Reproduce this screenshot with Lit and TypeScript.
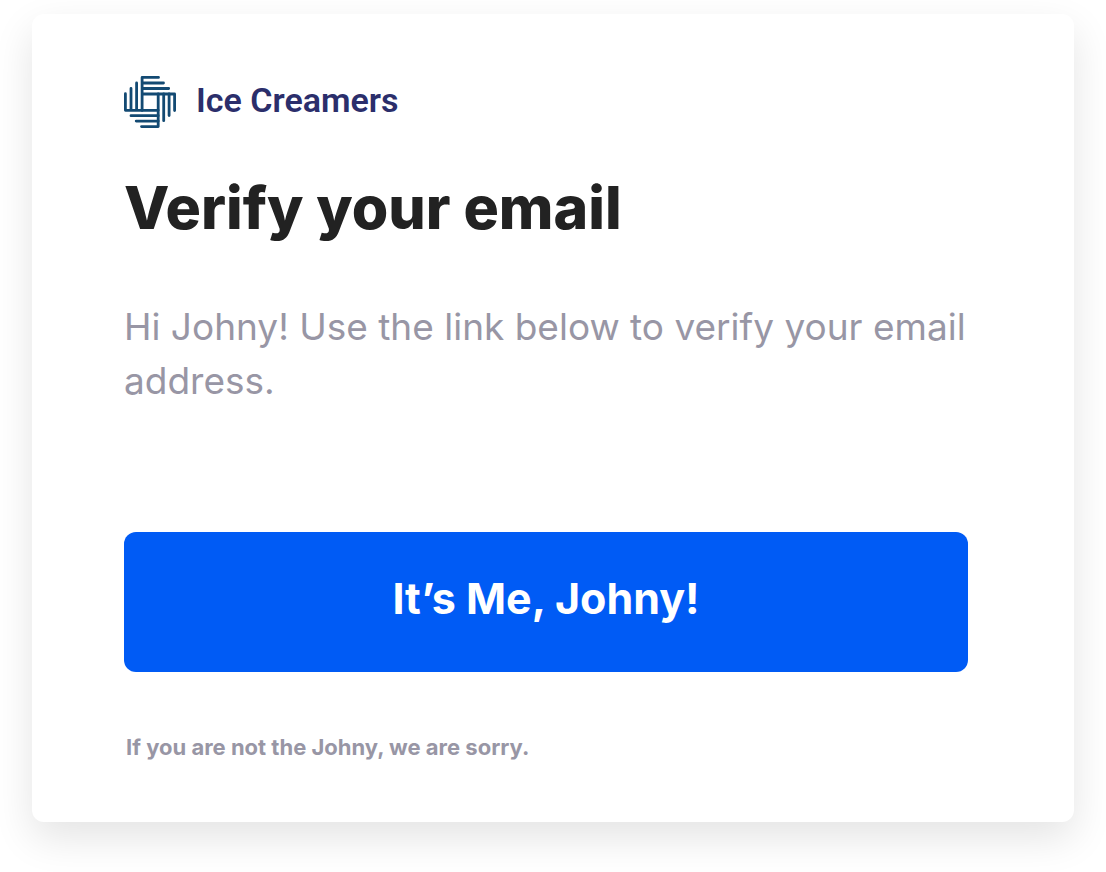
import { LitElement, html, css } from "lit";
import { customElement } from "lit/decorators.js";

@customElement("brand-mark")
class BrandMark extends LitElement {
  static styles = css`
    :host { display: flex; }
    svg { display: block; width: 52px; height: 52px; }
  `;

  render() {
    return html`
      <svg viewBox="0 0 52 52" fill="none" stroke="#134a73" stroke-width="2.8"
        stroke-linecap="round" stroke-linejoin="round" aria-hidden="true">
        <path d="M34.5 1.4H18.1V34.4M18.1 7H39.5M18.1 12.5H44.7M18.1 18H50.6V34.5" />
        <path d="M45.1 18V39.5M39.7 18V44.7M34.2 18V50.6H17.5" />
        <path d="M34.2 45.1H12.2M34.2 39.7H7M34.2 34.3H1.4V17.7M7 34.3V12.5M12.6 34.3V7" />
      </svg>
    `;
  }
}

@customElement("app-root")
class AppRoot extends LitElement {
  static styles = css`
    :host {
      display: block;
      box-sizing: border-box;
      min-height: 100vh;
      padding: 14px 32px 50px;
      overflow: hidden;
      background: #fff;
      font-family: Inter, "Open Sans", sans-serif;
    }
    .card {
      padding: 62px 92px 60px;
      border-radius: 12px;
      background: #fff;
      box-shadow: 0 16px 40px rgba(0, 0, 0, 0.11);
    }
    .content { max-width: 844px; }
    .brand {
      display: flex;
      align-items: flex-start;
      gap: 20px;
      color: #2b2e6b;
      font: 600 34px/48px Roboto, sans-serif;
    }
    h1 {
      margin: 44px 0 0;
      color: #222;
      font-size: 59px;
      font-weight: 800;
      line-height: 72px;
    }
    .message {
      margin: 56px 0 0;
      color: #9896a5;
      font-size: 37px;
      line-height: 54px;
    }
    .confirm {
      display: block;
      width: 100%;
      height: 140px;
      margin: 124px 0 0;
      padding: 0 0 8px;
      border: 0;
      border-radius: 12px;
      background: #005bf5;
      color: #fff;
      font: inherit;
      font-size: 43px;
      font-weight: 700;
      cursor: pointer;
    }
    .note {
      margin: 60px 0 0;
      padding-left: 2px;
      color: #9896a5;
      font-size: 22px;
      font-weight: 700;
      line-height: 30px;
    }
  `;

  render() {
    return html`
      <main class="card">
        <div class="content">
          <div class="brand"><brand-mark></brand-mark><span>Ice Creamers</span></div>
          <h1>Verify your email</h1>
          <p class="message">Hi Johny! Use the link below to verify your email address.</p>
          <button class="confirm" type="button">It’s Me, Johny!</button>
          <p class="note">If you are not the Johny, we are sorry.</p>
        </div>
      </main>
    `;
  }
}
